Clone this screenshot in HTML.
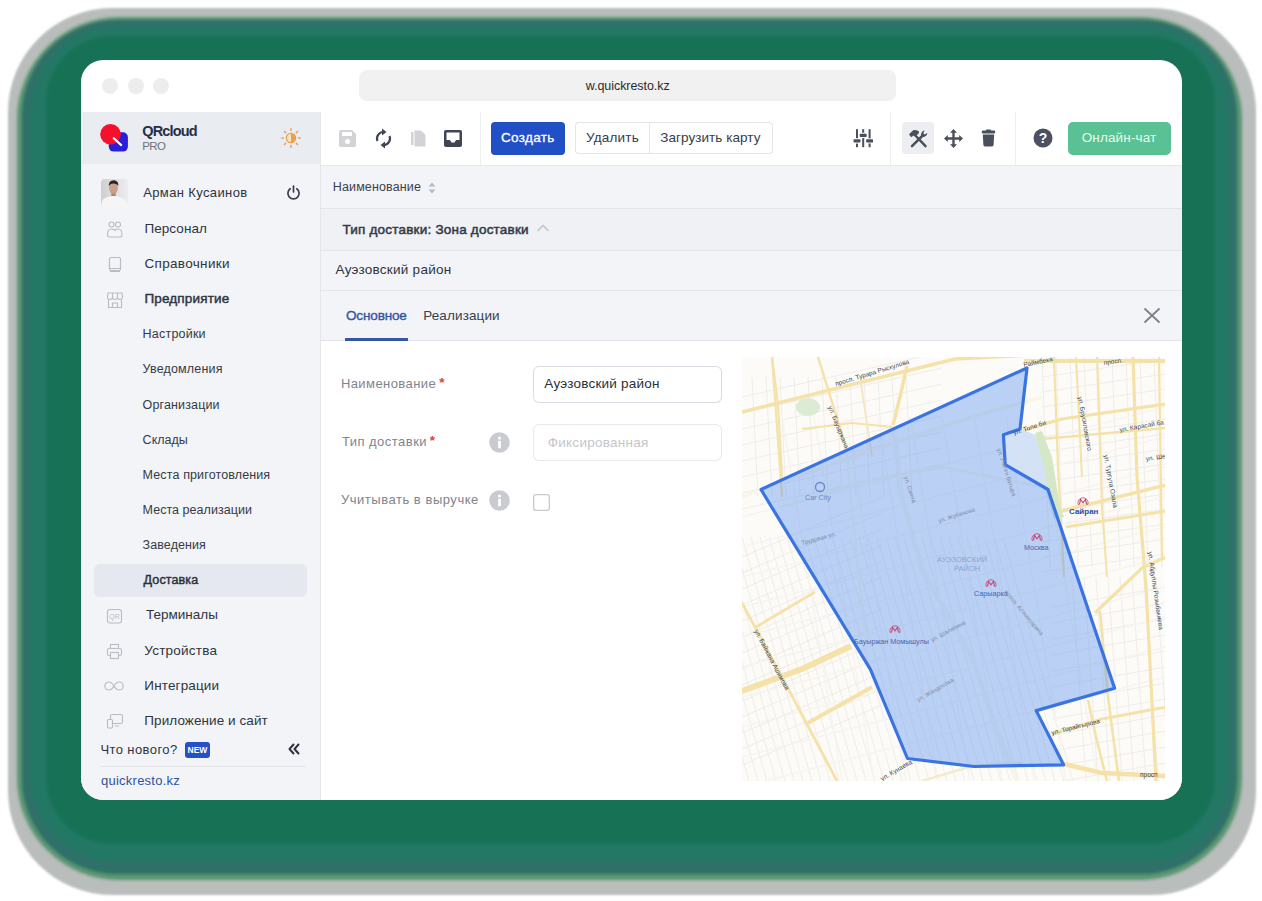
<!DOCTYPE html>
<html><head><meta charset="utf-8">
<style>
html,body{margin:0;padding:0;}
body{width:1262px;height:901px;overflow:hidden;background:#fff;position:relative;font-family:"Liberation Sans",sans-serif;}
.a{position:absolute;}
.t{position:absolute;white-space:nowrap;}
#noise{position:absolute;left:8px;top:8px;width:1248px;height:887px;border-radius:104px;background:#b9bdbb;filter:blur(1px)}
.g{position:absolute;}
#win{position:absolute;left:81px;top:60px;width:1101px;height:740px;border-radius:22px;background:#fff;overflow:hidden;}
</style></head><body>
<div id="noise"></div>
<div style="position:absolute;left:0;top:0;width:1262px;height:901px;filter:blur(1.5px)"><div class="g" style="left:17.0px;top:17.0px;width:1225.0px;height:863.0px;border-radius:102.0px;background:#5a9672"></div><div class="g" style="left:22.1px;top:20.4px;width:1215.1px;height:853.2px;border-radius:95.6px;background:#2f7068"></div><div class="g" style="left:31.1px;top:26.5px;width:1197.7px;height:835.9px;border-radius:84.4px;background:#227864"></div><div class="g" style="left:45.8px;top:36.4px;width:1169.2px;height:807.6px;border-radius:66.0px;background:#177255"></div></div>
<div id="win">
<div class="a" style="left:21px;top:18px;width:16px;height:16px;border-radius:50%;background:#ededed"></div>
<div class="a" style="left:47px;top:18px;width:16px;height:16px;border-radius:50%;background:#ededed"></div>
<div class="a" style="left:72px;top:18px;width:16px;height:16px;border-radius:50%;background:#ededed"></div>
<div class="a" style="left:278px;top:10px;width:537px;height:31px;border-radius:8px;background:#f1f1f1"></div>
<div class="t" id="t0" style="left:504.70px;top:20.12px;font-size:12.5px;line-height:12.5px;color:#2a2a2a;font-weight:400;letter-spacing:-0.050px;">w.quickresto.kz</div>
<div class="a" style="left:0px;top:52px;width:239px;height:688px;background:#f2f4f8"></div>
<div class="a" style="left:0px;top:52px;width:239px;height:52px;background:#e9ecf0"></div>
<div class="a" style="left:239px;top:52px;width:1px;height:688px;background:#e4e6eb"></div>
<svg class="a" style="left:17px;top:62px" width="32" height="32" viewBox="0 0 32 32"><rect x="10.8" y="10.2" width="19.1" height="19.4" rx="5" fill="#2b1fd6"/><circle cx="12.5" cy="12.2" r="10.3" fill="#f5102e"/><line x1="15.8" y1="16.2" x2="23.2" y2="23.1" stroke="#fff" stroke-width="2.2" stroke-linecap="round"/></svg>
<div class="t" id="t1" style="left:61.20px;top:63.73px;font-size:14.5px;line-height:14.5px;color:#262e48;font-weight:700;letter-spacing:-0.817px;">QRcloud</div>
<div class="t" id="t2" style="left:61.30px;top:81.17px;font-size:11.5px;line-height:11.5px;color:#6e737e;font-weight:400;letter-spacing:-0.600px;">PRO</div>
<svg class="a" style="left:194.5px;top:63.3px" width="30" height="30" viewBox="0 0 30 30"><circle cx="15" cy="15" r="4.6" fill="#fbe3c4" stroke="#eb9f48" stroke-width="1.4"/><path d="M15 10.8 A4.2 4.2 0 0 1 15 19.2 Z" fill="#eb9f48"/><line x1="22.60" y1="15.00" x2="24.20" y2="15.00" stroke="#e4a35a" stroke-width="1.5" stroke-linecap="round"/><line x1="20.37" y1="20.37" x2="21.51" y2="21.51" stroke="#e4a35a" stroke-width="1.5" stroke-linecap="round"/><line x1="15.00" y1="22.60" x2="15.00" y2="24.20" stroke="#e4a35a" stroke-width="1.5" stroke-linecap="round"/><line x1="9.63" y1="20.37" x2="8.49" y2="21.51" stroke="#e4a35a" stroke-width="1.5" stroke-linecap="round"/><line x1="7.40" y1="15.00" x2="5.80" y2="15.00" stroke="#e4a35a" stroke-width="1.5" stroke-linecap="round"/><line x1="9.63" y1="9.63" x2="8.49" y2="8.49" stroke="#e4a35a" stroke-width="1.5" stroke-linecap="round"/><line x1="15.00" y1="7.40" x2="15.00" y2="5.80" stroke="#e4a35a" stroke-width="1.5" stroke-linecap="round"/><line x1="20.37" y1="9.63" x2="21.51" y2="8.49" stroke="#e4a35a" stroke-width="1.5" stroke-linecap="round"/></svg>
<svg class="a" style="left:20px;top:119px" width="27" height="27" viewBox="0 0 27 27"><defs><linearGradient id="avg" x1="0" x2="1"><stop offset="0" stop-color="#cfcfd2"/><stop offset="1" stop-color="#ededef"/></linearGradient><clipPath id="avc"><rect width="27" height="27" rx="4"/></clipPath></defs><g clip-path="url(#avc)"><rect width="27" height="27" fill="url(#avg)"/><rect x="10.3" y="12" width="4.4" height="5.5" fill="#a98572"/><ellipse cx="12.5" cy="9.2" rx="4.4" ry="5.6" fill="#c9a18b"/><path d="M7.8 7.5 Q7.5 1.2 12.8 1.2 Q17.6 1.3 17.3 7 Q16 4.2 12.5 4.4 Q9 4.4 7.8 7.5Z" fill="#2b2522"/><path d="M0 27 L1.5 21 Q4 18 11 17 L14 17 Q21 18 24 21 L27 27Z" fill="#f5f5f5"/></g></svg>
<div class="t" id="t3" style="left:62.20px;top:126.00px;font-size:13px;line-height:13px;color:#2d3240;font-weight:400;letter-spacing:0.377px;">Арман Кусаинов</div>
<svg class="a" style="left:205px;top:125px" width="15" height="15" viewBox="0 0 15 15"><path d="M4.2 3.8 A5.6 5.6 0 1 0 10.8 3.8" fill="none" stroke="#3a3f4c" stroke-width="1.7" stroke-linecap="round"/><line x1="7.5" y1="1.2" x2="7.5" y2="7" stroke="#3a3f4c" stroke-width="1.7" stroke-linecap="round"/></svg>
<div class="t" id="t4" style="left:63.40px;top:162.27px;font-size:13.5px;line-height:13.5px;color:#2f3441;font-weight:400;letter-spacing:0.086px;">Персонал</div>
<svg class="a" style="left:25px;top:161px" width="18" height="18" viewBox="0 0 18 18"><circle cx="5.5" cy="3.5" r="2.5" fill="none" stroke="#b9bcc4" stroke-width="1.1"/><circle cx="12" cy="3.5" r="2.5" fill="none" stroke="#b9bcc4" stroke-width="1.1"/><path d="M3 16 Q1.5 16 1.5 13.5 Q1.5 8 5.5 8 Q8.5 8 8.8 10 Q9 8 12 8 Q16 8 16 13.5 Q16 16 14.5 16Z" fill="none" stroke="#b9bcc4" stroke-width="1.1"/></svg>
<div class="t" id="t5" style="left:63.40px;top:197.27px;font-size:13.5px;line-height:13.5px;color:#2f3441;font-weight:400;letter-spacing:0.340px;">Справочники</div>
<svg class="a" style="left:26px;top:196px" width="16" height="18" viewBox="0 0 16 18"><rect x="2.5" y="1.5" width="11" height="13" rx="1.5" fill="none" stroke="#b9bcc4" stroke-width="1.2"/><line x1="2.5" y1="12.5" x2="13.5" y2="12.5" stroke="#b9bcc4" stroke-width="1"/><line x1="3" y1="15.5" x2="13" y2="15.5" stroke="#b9bcc4" stroke-width="1"/></svg>
<div class="t" id="t6" style="left:63.40px;top:231.87px;font-size:13.5px;line-height:13.5px;color:#2f3441;font-weight:400;letter-spacing:0.170px;-webkit-text-stroke:0.45px #2f3441;">Предприятие</div>
<svg class="a" style="left:25px;top:231px" width="18" height="18" viewBox="0 0 18 18"><path d="M2 2 H16 L16.5 6 Q16.5 8.5 14 8.5 Q11.5 8.5 11.5 6 Q11.5 8.5 9 8.5 Q6.5 8.5 6.5 6 Q6.5 8.5 4 8.5 Q1.5 8.5 1.5 6Z" fill="none" stroke="#b9bcc4" stroke-width="1.1"/><path d="M2.5 8.5 V16.5 H15.5 V8.5 M6.5 16.5 V12 H11.5 V16.5" fill="none" stroke="#b9bcc4" stroke-width="1.1"/><line x1="6.5" y1="2" x2="6.5" y2="6" stroke="#b9bcc4" stroke-width="1"/><line x1="11.5" y1="2" x2="11.5" y2="6" stroke="#b9bcc4" stroke-width="1"/></svg>
<div class="t" id="t7" style="left:61.60px;top:268.22px;font-size:12.5px;line-height:12.5px;color:#353a47;font-weight:400;letter-spacing:0.213px;">Настройки</div>
<div class="t" id="t8" style="left:61.60px;top:303.42px;font-size:12.5px;line-height:12.5px;color:#353a47;font-weight:400;letter-spacing:0.170px;">Уведомления</div>
<div class="t" id="t9" style="left:61.60px;top:338.92px;font-size:12.5px;line-height:12.5px;color:#353a47;font-weight:400;letter-spacing:0.140px;">Организации</div>
<div class="t" id="t10" style="left:61.60px;top:373.52px;font-size:12.5px;line-height:12.5px;color:#353a47;font-weight:400;letter-spacing:0.020px;">Склады</div>
<div class="t" id="t11" style="left:61.60px;top:408.72px;font-size:12.5px;line-height:12.5px;color:#353a47;font-weight:400;letter-spacing:0.128px;">Места приготовления</div>
<div class="t" id="t12" style="left:61.60px;top:443.92px;font-size:12.5px;line-height:12.5px;color:#353a47;font-weight:400;letter-spacing:0.040px;">Места реализации</div>
<div class="t" id="t13" style="left:61.60px;top:479.22px;font-size:12.5px;line-height:12.5px;color:#353a47;font-weight:400;letter-spacing:0.088px;">Заведения</div>
<div class="a" style="left:13px;top:504px;width:213px;height:33px;border-radius:6px;background:#e5e8ee"></div>
<div class="t" id="t14" style="left:62.60px;top:514.12px;font-size:12.5px;line-height:12.5px;color:#2b303c;font-weight:400;letter-spacing:0.129px;-webkit-text-stroke:0.45px #2b303c;">Доставка</div>
<div class="t" id="t15" style="left:64.90px;top:547.87px;font-size:13.5px;line-height:13.5px;color:#2f3441;font-weight:400;letter-spacing:0.025px;">Терминалы</div>
<svg class="a" style="left:25px;top:548px" width="18" height="17" viewBox="0 0 18 17"><rect x="1.5" y="1.5" width="14" height="13.5" rx="2.5" fill="none" stroke="#b9bcc4" stroke-width="1.1"/><text x="8.5" y="11" font-size="7" text-anchor="middle" fill="#b9bcc4" font-family="Liberation Sans">QR</text></svg>
<div class="t" id="t16" style="left:63.30px;top:583.87px;font-size:13.5px;line-height:13.5px;color:#2f3441;font-weight:400;letter-spacing:0.222px;">Устройства</div>
<svg class="a" style="left:25px;top:583px" width="18" height="17" viewBox="0 0 18 17"><rect x="4.5" y="1.5" width="8" height="4" fill="none" stroke="#b9bcc4" stroke-width="1.1"/><rect x="1.5" y="5.5" width="14" height="7" rx="1.5" fill="none" stroke="#b9bcc4" stroke-width="1.1"/><rect x="4.5" y="9.5" width="8" height="6" fill="#f2f4f8" stroke="#b9bcc4" stroke-width="1.1"/></svg>
<div class="t" id="t17" style="left:63.30px;top:618.97px;font-size:13.5px;line-height:13.5px;color:#2f3441;font-weight:400;letter-spacing:0.144px;">Интеграции</div>
<svg class="a" style="left:23px;top:620px" width="20" height="12" viewBox="0 0 20 12"><path d="M10 6 C8 2.5 6.5 2 4.8 2 A4 4 0 0 0 4.8 10 C6.5 10 8 9.5 10 6 C12 2.5 13.5 2 15.2 2 A4 4 0 0 1 15.2 10 C13.5 10 12 9.5 10 6Z" fill="none" stroke="#b9bcc4" stroke-width="1.2"/></svg>
<div class="t" id="t18" style="left:63.30px;top:654.17px;font-size:13.5px;line-height:13.5px;color:#2f3441;font-weight:400;letter-spacing:0.075px;">Приложение и сайт</div>
<svg class="a" style="left:25px;top:653px" width="18" height="17" viewBox="0 0 18 17"><rect x="4.5" y="1.5" width="12" height="9" rx="1.5" fill="none" stroke="#b9bcc4" stroke-width="1.1"/><rect x="1.5" y="6.5" width="5" height="8.5" rx="1" fill="#f2f4f8" stroke="#b9bcc4" stroke-width="1.1"/><line x1="9" y1="13" x2="13" y2="13" stroke="#b9bcc4" stroke-width="1"/></svg>
<div class="t" id="t19" style="left:19.40px;top:682.60px;font-size:13px;line-height:13px;color:#2f3441;font-weight:400;letter-spacing:0.410px;">Что нового?</div>
<div class="a" style="left:104px;top:682px;width:25px;height:16px;border-radius:3px;background:#2450c8"></div>
<div class="t" id="t20" style="left:106.50px;top:686.30px;font-size:8.5px;line-height:8.5px;color:#ffffff;font-weight:700;letter-spacing:0.000px;">NEW</div>
<svg class="a" style="left:206px;top:682px" width="14" height="14" viewBox="0 0 14 14"><path d="M6.5 2.5 L2.5 7 L6.5 11.5 M11.5 2.5 L7.5 7 L11.5 11.5" fill="none" stroke="#2d3240" stroke-width="2" stroke-linejoin="round" stroke-linecap="round"/></svg>
<div class="a" style="left:19px;top:706px;width:206px;height:1px;background:#e3e5ea"></div>
<div class="t" id="t21" style="left:20.00px;top:713.70px;font-size:13px;line-height:13px;color:#30519f;font-weight:400;letter-spacing:0.242px;">quickresto.kz</div>
<div class="a" style="left:240px;top:52px;width:861px;height:53px;background:#ffffff"></div>
<div class="a" style="left:240px;top:105px;width:861px;height:1px;background:#e6e8ec"></div>
<div class="a" style="left:399px;top:52px;width:1px;height:53px;background:#eceef1"></div>
<div class="a" style="left:809px;top:52px;width:1px;height:53px;background:#eceef1"></div>
<div class="a" style="left:934px;top:52px;width:1px;height:53px;background:#eceef1"></div>
<svg class="a" style="left:258px;top:70px" width="17" height="17" viewBox="0 0 17 17"><path d="M2 0 H13 L17 4 V15 A2 2 0 0 1 15 17 H2 A2 2 0 0 1 0 15 V2 A2 2 0 0 1 2 0Z" fill="#d2d3d6"/><rect x="3" y="2" width="10" height="4" fill="#fff"/><circle cx="8.5" cy="11.5" r="2.5" fill="#fff"/></svg>
<svg class="a" style="left:293px;top:68px" width="19" height="21" viewBox="0 0 19 21"><path d="M9.5 4 A6.5 6.5 0 0 0 3.5 13" fill="none" stroke="#404556" stroke-width="2.2"/><path d="M9.5 17 A6.5 6.5 0 0 0 15.5 8" fill="none" stroke="#404556" stroke-width="2.2"/><path d="M8 0.5 L12.5 4 L8 7.5Z" fill="#404556"/><path d="M11 13.5 L6.5 17 L11 20.5Z" fill="#404556"/></svg>
<svg class="a" style="left:329px;top:69px" width="17" height="19" viewBox="0 0 17 19"><path d="M1 3 H9 V16 H1Z" fill="#d2d3d6"/><path d="M4 1 H11 L16 6 V18 H4Z" fill="#d2d3d6" stroke="#fff" stroke-width="1"/></svg>
<svg class="a" style="left:363px;top:70px" width="18" height="17" viewBox="0 0 18 17"><path d="M2 0 H16 A2 2 0 0 1 18 2 V15 A2 2 0 0 1 16 17 H2 A2 2 0 0 1 0 15 V2 A2 2 0 0 1 2 0Z" fill="#404556"/><path d="M2.5 2.5 H15.5 V10 H12 L10.5 12.5 H7.5 L6 10 H2.5Z" fill="#fff"/></svg>
<div class="a" style="left:410px;top:62px;width:74px;height:33px;border-radius:4px;background:#2150c6"></div>
<div class="t" id="t22" style="left:420.00px;top:71.37px;font-size:13.5px;line-height:13.5px;color:#ffffff;font-weight:400;letter-spacing:0.317px;-webkit-text-stroke:0.3px #fff;">Создать</div>
<div class="a" style="left:494px;top:62px;width:198px;height:32px;border-radius:4px;background:#fff;box-shadow:inset 0 0 0 1px #e3e5e9"></div>
<div class="a" style="left:568px;top:63px;width:1px;height:30px;background:#e3e5e9"></div>
<div class="t" id="t23" style="left:505.00px;top:71.37px;font-size:13.5px;line-height:13.5px;color:#363b48;font-weight:400;letter-spacing:0.200px;">Удалить</div>
<div class="t" id="t24" style="left:579.20px;top:71.37px;font-size:13.5px;line-height:13.5px;color:#363b48;font-weight:400;letter-spacing:0.064px;">Загрузить карту</div>
<svg class="a" style="left:772px;top:68px" width="20" height="21" viewBox="0 0 20 21"><rect x="3" y="1.2" width="2" height="18" fill="#4a4f5c"/><rect x="9.2" y="1.2" width="2" height="18" fill="#4a4f5c"/><rect x="15.6" y="1.2" width="2" height="18" fill="#4a4f5c"/><rect x="0.5" y="11.3" width="7" height="3.2" rx="0.8" fill="#4a4f5c"/><rect x="6.7" y="5.8" width="7" height="3.2" rx="0.8" fill="#4a4f5c"/><rect x="13.1" y="11.3" width="7" height="3.2" rx="0.8" fill="#4a4f5c"/><rect x="3" y="10.2" width="2" height="1.1" fill="#fff"/><rect x="3" y="14.5" width="2" height="1.1" fill="#fff"/><rect x="9.2" y="4.7" width="2" height="1.1" fill="#fff"/><rect x="9.2" y="9" width="2" height="1.1" fill="#fff"/><rect x="15.6" y="10.2" width="2" height="1.1" fill="#fff"/><rect x="15.6" y="14.5" width="2" height="1.1" fill="#fff"/></svg>
<div class="a" style="left:821px;top:62px;width:32px;height:32px;border-radius:4px;background:#eceef2"></div>
<svg class="a" style="left:827px;top:68px" width="22" height="21" viewBox="0 0 22 21"><path d="M6 6 L17.5 18.2" stroke="#4a4f5c" stroke-width="2.5" stroke-linecap="round"/><path d="M1 6.3 L5.2 2.2 Q7.5 1.3 10.8 3.2 L11 5 L7.2 8.8 L5.6 7.6 L3.2 9.3 Z" fill="#4a4f5c"/><path d="M4 18.2 L15.2 7" stroke="#4a4f5c" stroke-width="2.5" stroke-linecap="round"/><path d="M13.2 8.2 A4.2 4.2 0 0 1 16.8 2.6 L15.2 5.2 L16.6 6.6 L19.3 5 A4.2 4.2 0 0 1 13.6 8.8 Z" fill="#4a4f5c"/></svg>
<svg class="a" style="left:863px;top:69px" width="19" height="19" viewBox="0 0 19 19"><path d="M9.5 2 V17 M2 9.5 H17" stroke="#4a4f5c" stroke-width="2.4"/><path d="M9.5 0 L13 3.8 H6Z M9.5 19 L13 15.2 H6Z M0 9.5 L3.8 6 V13Z M19 9.5 L15.2 6 V13Z" fill="#4a4f5c"/></svg>
<svg class="a" style="left:900px;top:69px" width="15" height="19" viewBox="0 0 15 19"><rect x="0.8" y="1.6" width="13.4" height="2.8" rx="1.2" fill="#4a4f5c"/><rect x="5" y="0.6" width="5" height="2" rx="0.8" fill="#4a4f5c"/><path d="M1.8 5.6 H13.2 L12.6 16 A2 2 0 0 1 10.6 17.6 H4.4 A2 2 0 0 1 2.4 16Z" fill="#4a4f5c"/></svg>
<svg class="a" style="left:952px;top:68px" width="20" height="20" viewBox="0 0 20 20"><circle cx="10" cy="10" r="9.5" fill="#4b5063"/><text x="10" y="15.2" font-size="14" font-weight="700" text-anchor="middle" fill="#fff" font-family="Liberation Sans">?</text></svg>
<div class="a" style="left:987px;top:62px;width:103px;height:33px;border-radius:5px;background:#5ac195"></div>
<div class="t" id="t25" style="left:1000.70px;top:71.17px;font-size:13.5px;line-height:13.5px;color:#e2fdee;font-weight:400;letter-spacing:0.144px;">Онлайн-чат</div>
<div class="a" style="left:240px;top:106px;width:861px;height:175px;background:#f3f4f7"></div>
<div class="a" style="left:240px;top:148px;width:861px;height:1px;background:#e3e5e9"></div>
<div class="a" style="left:240px;top:149px;width:861px;height:41px;background:#eff1f4"></div>
<div class="a" style="left:240px;top:190px;width:861px;height:1px;background:#e3e5e9"></div>
<div class="a" style="left:240px;top:230px;width:861px;height:1px;background:#e3e5e9"></div>
<div class="a" style="left:240px;top:280px;width:861px;height:1px;background:#e3e5e9"></div>
<div class="t" id="t26" style="left:251.80px;top:121.02px;font-size:12.5px;line-height:12.5px;color:#3b404d;font-weight:400;letter-spacing:0.127px;">Наименование</div>
<svg class="a" style="left:346px;top:121px" width="10" height="14" viewBox="0 0 10 14"><path d="M5 1.5 L8.5 5.5 H1.5Z M5 12.5 L8.5 8.5 H1.5Z" fill="#b6b9c0"/></svg>
<div class="t" id="t27" style="left:261.40px;top:162.67px;font-size:13.5px;line-height:13.5px;color:#343946;font-weight:400;letter-spacing:0.212px;-webkit-text-stroke:0.5px #343946;">Тип доставки: Зона доставки</div>
<svg class="a" style="left:455px;top:162px" width="14" height="12" viewBox="0 0 14 12"><path d="M1.5 9 L7 3.5 L12.5 9" fill="none" stroke="#c3c6cc" stroke-width="1.6"/></svg>
<div class="t" id="t28" style="left:254.60px;top:202.97px;font-size:13.5px;line-height:13.5px;color:#2f3441;font-weight:400;letter-spacing:0.253px;">Ауэзовский район</div>
<div class="t" id="t29" style="left:265.00px;top:248.77px;font-size:13.5px;line-height:13.5px;color:#3456a6;font-weight:400;letter-spacing:-0.143px;-webkit-text-stroke:0.4px #3456a6;">Основное</div>
<div class="a" style="left:264px;top:278px;width:63px;height:3px;background:#3456a6"></div>
<div class="t" id="t30" style="left:342.20px;top:248.77px;font-size:13.5px;line-height:13.5px;color:#3a3f4c;font-weight:400;letter-spacing:0.122px;">Реализации</div>
<svg class="a" style="left:1062px;top:247px" width="18" height="17" viewBox="0 0 18 17"><path d="M1.5 1.5 L16.5 15.5 M16.5 1.5 L1.5 15.5" stroke="#7b808b" stroke-width="1.8"/></svg>
<div class="a" style="left:240px;top:281px;width:861px;height:459px;background:#ffffff"></div>
<div class="t" id="t31" style="left:259.90px;top:317.30px;font-size:13px;line-height:13px;color:#80848f;font-weight:400;letter-spacing:0.427px;">Наименование</div>
<div class="t" id="t32" style="left:358.20px;top:316.07px;font-size:13.5px;line-height:13.5px;color:#d9433b;font-weight:700;letter-spacing:0.000px;">*</div>
<div class="a" style="left:452px;top:306px;width:189px;height:37px;border-radius:6px;background:#fff;box-shadow:inset 0 0 0 1px #d9dce2"></div>
<div class="t" id="t33" style="left:463.30px;top:317.37px;font-size:13.5px;line-height:13.5px;color:#2b2f3a;font-weight:400;letter-spacing:0.227px;">Ауэзовский район</div>
<div class="t" id="t34" style="left:260.90px;top:375.10px;font-size:13px;line-height:13px;color:#80848f;font-weight:400;letter-spacing:0.473px;">Тип доставки</div>
<div class="t" id="t35" style="left:348.80px;top:373.87px;font-size:13.5px;line-height:13.5px;color:#d9433b;font-weight:700;letter-spacing:0.000px;">*</div>
<svg class="a" style="left:408px;top:372px" width="21" height="21" viewBox="0 0 21 21"><circle cx="10.5" cy="10.5" r="10.3" fill="#c9cbd0"/><circle cx="10.5" cy="6" r="1.6" fill="#fff"/><rect x="9.1" y="8.8" width="2.8" height="7.5" rx="0.6" fill="#fff"/></svg>
<div class="a" style="left:452px;top:364px;width:189px;height:37px;border-radius:6px;background:#fff;box-shadow:inset 0 0 0 1px #e7e9ed"></div>
<div class="t" id="t36" style="left:466.70px;top:375.77px;font-size:13.5px;line-height:13.5px;color:#c3c6cc;font-weight:400;letter-spacing:0.275px;">Фиксированная</div>
<div class="t" id="t37" style="left:259.90px;top:432.90px;font-size:13px;line-height:13px;color:#80848f;font-weight:400;letter-spacing:0.533px;">Учитывать в выручке</div>
<svg class="a" style="left:408px;top:430px" width="21" height="21" viewBox="0 0 21 21"><circle cx="10.5" cy="10.5" r="10.3" fill="#c9cbd0"/><circle cx="10.5" cy="6" r="1.6" fill="#fff"/><rect x="9.1" y="8.8" width="2.8" height="7.5" rx="0.6" fill="#fff"/></svg>
<div class="a" style="left:452px;top:434px;width:17px;height:17px;border-radius:3px;background:#fff;box-shadow:inset 0 0 0 1.3px #c6cad1"></div>
<div class="a" style="left:661px;top:297px;width:423px;height:424px;border-radius:3px;overflow:hidden"><svg width="423" height="424" viewBox="0 0 423 424"><rect width="423" height="424" fill="#fcfbf7"/><line x1="-108.0" y1="180.0" x2="-38.0" y2="424.0" stroke="#ebeae5" stroke-width="0.8"/><line x1="-99.0" y1="180.0" x2="-29.0" y2="424.0" stroke="#ebeae5" stroke-width="0.8"/><line x1="-90.0" y1="180.0" x2="-20.0" y2="424.0" stroke="#ebeae5" stroke-width="0.8"/><line x1="-81.0" y1="180.0" x2="-11.0" y2="424.0" stroke="#ebeae5" stroke-width="0.8"/><line x1="-72.0" y1="180.0" x2="-2.0" y2="424.0" stroke="#ebeae5" stroke-width="0.8"/><line x1="-63.0" y1="180.0" x2="7.0" y2="424.0" stroke="#ebeae5" stroke-width="0.8"/><line x1="-54.0" y1="180.0" x2="16.0" y2="424.0" stroke="#ebeae5" stroke-width="0.8"/><line x1="-45.0" y1="180.0" x2="25.0" y2="424.0" stroke="#ebeae5" stroke-width="0.8"/><line x1="-36.0" y1="180.0" x2="34.0" y2="424.0" stroke="#ebeae5" stroke-width="0.8"/><line x1="-27.0" y1="180.0" x2="43.0" y2="424.0" stroke="#ebeae5" stroke-width="0.8"/><line x1="-18.0" y1="180.0" x2="52.0" y2="424.0" stroke="#ebeae5" stroke-width="0.8"/><line x1="-9.0" y1="180.0" x2="61.0" y2="424.0" stroke="#ebeae5" stroke-width="0.8"/><line x1="0.0" y1="180.0" x2="70.0" y2="424.0" stroke="#ebeae5" stroke-width="0.8"/><line x1="9.0" y1="180.0" x2="79.0" y2="424.0" stroke="#ebeae5" stroke-width="0.8"/><line x1="18.0" y1="180.0" x2="88.0" y2="424.0" stroke="#ebeae5" stroke-width="0.8"/><line x1="27.0" y1="180.0" x2="97.0" y2="424.0" stroke="#ebeae5" stroke-width="0.8"/><line x1="36.0" y1="180.0" x2="106.0" y2="424.0" stroke="#ebeae5" stroke-width="0.8"/><line x1="45.0" y1="180.0" x2="115.0" y2="424.0" stroke="#ebeae5" stroke-width="0.8"/><line x1="54.0" y1="180.0" x2="124.0" y2="424.0" stroke="#ebeae5" stroke-width="0.8"/><line x1="63.0" y1="180.0" x2="133.0" y2="424.0" stroke="#ebeae5" stroke-width="0.8"/><line x1="72.0" y1="180.0" x2="142.0" y2="424.0" stroke="#ebeae5" stroke-width="0.8"/><line x1="81.0" y1="180.0" x2="151.0" y2="424.0" stroke="#ebeae5" stroke-width="0.8"/><line x1="90.0" y1="180.0" x2="160.0" y2="424.0" stroke="#ebeae5" stroke-width="0.8"/><line x1="99.0" y1="180.0" x2="169.0" y2="424.0" stroke="#ebeae5" stroke-width="0.8"/><line x1="108.0" y1="180.0" x2="178.0" y2="424.0" stroke="#ebeae5" stroke-width="0.8"/><line x1="117.0" y1="180.0" x2="187.0" y2="424.0" stroke="#ebeae5" stroke-width="0.8"/><line x1="126.0" y1="180.0" x2="196.0" y2="424.0" stroke="#ebeae5" stroke-width="0.8"/><line x1="135.0" y1="180.0" x2="205.0" y2="424.0" stroke="#ebeae5" stroke-width="0.8"/><line x1="144.0" y1="180.0" x2="214.0" y2="424.0" stroke="#ebeae5" stroke-width="0.8"/><line x1="153.0" y1="180.0" x2="223.0" y2="424.0" stroke="#ebeae5" stroke-width="0.8"/><line x1="162.0" y1="180.0" x2="232.0" y2="424.0" stroke="#ebeae5" stroke-width="0.8"/><line x1="171.0" y1="180.0" x2="241.0" y2="424.0" stroke="#ebeae5" stroke-width="0.8"/><line x1="180.0" y1="180.0" x2="250.0" y2="424.0" stroke="#ebeae5" stroke-width="0.8"/><line x1="189.0" y1="180.0" x2="259.0" y2="424.0" stroke="#ebeae5" stroke-width="0.8"/><line x1="198.0" y1="180.0" x2="268.0" y2="424.0" stroke="#ebeae5" stroke-width="0.8"/><line x1="207.0" y1="180.0" x2="277.0" y2="424.0" stroke="#ebeae5" stroke-width="0.8"/><line x1="216.0" y1="180.0" x2="286.0" y2="424.0" stroke="#ebeae5" stroke-width="0.8"/><line x1="225.0" y1="180.0" x2="295.0" y2="424.0" stroke="#ebeae5" stroke-width="0.8"/><line x1="234.0" y1="180.0" x2="304.0" y2="424.0" stroke="#ebeae5" stroke-width="0.8"/><line x1="243.0" y1="180.0" x2="313.0" y2="424.0" stroke="#ebeae5" stroke-width="0.8"/><line x1="252.0" y1="180.0" x2="322.0" y2="424.0" stroke="#ebeae5" stroke-width="0.8"/><line x1="261.0" y1="180.0" x2="331.0" y2="424.0" stroke="#ebeae5" stroke-width="0.8"/><line x1="0.0" y1="200.0" x2="140.0" y2="140.0" stroke="#ebeae5" stroke-width="0.8"/><line x1="0.0" y1="216.0" x2="140.0" y2="156.0" stroke="#ebeae5" stroke-width="0.8"/><line x1="0.0" y1="232.0" x2="140.0" y2="172.0" stroke="#ebeae5" stroke-width="0.8"/><line x1="0.0" y1="248.0" x2="140.0" y2="188.0" stroke="#ebeae5" stroke-width="0.8"/><line x1="0.0" y1="264.0" x2="140.0" y2="204.0" stroke="#ebeae5" stroke-width="0.8"/><line x1="0.0" y1="280.0" x2="140.0" y2="220.0" stroke="#ebeae5" stroke-width="0.8"/><line x1="0.0" y1="296.0" x2="140.0" y2="236.0" stroke="#ebeae5" stroke-width="0.8"/><line x1="0.0" y1="312.0" x2="140.0" y2="252.0" stroke="#ebeae5" stroke-width="0.8"/><line x1="0.0" y1="328.0" x2="140.0" y2="268.0" stroke="#ebeae5" stroke-width="0.8"/><line x1="0.0" y1="344.0" x2="140.0" y2="284.0" stroke="#ebeae5" stroke-width="0.8"/><line x1="0.0" y1="360.0" x2="140.0" y2="300.0" stroke="#ebeae5" stroke-width="0.8"/><line x1="0.0" y1="376.0" x2="140.0" y2="316.0" stroke="#ebeae5" stroke-width="0.8"/><line x1="0.0" y1="392.0" x2="140.0" y2="332.0" stroke="#ebeae5" stroke-width="0.8"/><line x1="0.0" y1="408.0" x2="140.0" y2="348.0" stroke="#ebeae5" stroke-width="0.8"/><line x1="10.0" y1="20.0" x2="16.0" y2="140.0" stroke="#ebeae5" stroke-width="0.8"/><line x1="24.0" y1="20.0" x2="30.0" y2="140.0" stroke="#ebeae5" stroke-width="0.8"/><line x1="38.0" y1="20.0" x2="44.0" y2="140.0" stroke="#ebeae5" stroke-width="0.8"/><line x1="52.0" y1="20.0" x2="58.0" y2="140.0" stroke="#ebeae5" stroke-width="0.8"/><line x1="66.0" y1="20.0" x2="72.0" y2="140.0" stroke="#ebeae5" stroke-width="0.8"/><line x1="80.0" y1="20.0" x2="86.0" y2="140.0" stroke="#ebeae5" stroke-width="0.8"/><line x1="94.0" y1="20.0" x2="100.0" y2="140.0" stroke="#ebeae5" stroke-width="0.8"/><line x1="108.0" y1="20.0" x2="114.0" y2="140.0" stroke="#ebeae5" stroke-width="0.8"/><line x1="122.0" y1="20.0" x2="128.0" y2="140.0" stroke="#ebeae5" stroke-width="0.8"/><line x1="136.0" y1="20.0" x2="142.0" y2="140.0" stroke="#ebeae5" stroke-width="0.8"/><line x1="150.0" y1="20.0" x2="156.0" y2="140.0" stroke="#ebeae5" stroke-width="0.8"/><line x1="164.0" y1="20.0" x2="170.0" y2="140.0" stroke="#ebeae5" stroke-width="0.8"/><line x1="0.0" y1="40.0" x2="200.0" y2="-5.0" stroke="#ebeae5" stroke-width="0.8"/><line x1="0.0" y1="56.0" x2="200.0" y2="11.0" stroke="#ebeae5" stroke-width="0.8"/><line x1="0.0" y1="72.0" x2="200.0" y2="27.0" stroke="#ebeae5" stroke-width="0.8"/><line x1="0.0" y1="88.0" x2="200.0" y2="43.0" stroke="#ebeae5" stroke-width="0.8"/><line x1="0.0" y1="104.0" x2="200.0" y2="59.0" stroke="#ebeae5" stroke-width="0.8"/><line x1="0.0" y1="120.0" x2="200.0" y2="75.0" stroke="#ebeae5" stroke-width="0.8"/><line x1="0.0" y1="136.0" x2="200.0" y2="91.0" stroke="#ebeae5" stroke-width="0.8"/><line x1="0.0" y1="152.0" x2="200.0" y2="107.0" stroke="#ebeae5" stroke-width="0.8"/><line x1="300.0" y1="0.0" x2="308.0" y2="210.0" stroke="#ebeae5" stroke-width="0.8"/><line x1="314.0" y1="0.0" x2="322.0" y2="210.0" stroke="#ebeae5" stroke-width="0.8"/><line x1="328.0" y1="0.0" x2="336.0" y2="210.0" stroke="#ebeae5" stroke-width="0.8"/><line x1="342.0" y1="0.0" x2="350.0" y2="210.0" stroke="#ebeae5" stroke-width="0.8"/><line x1="356.0" y1="0.0" x2="364.0" y2="210.0" stroke="#ebeae5" stroke-width="0.8"/><line x1="370.0" y1="0.0" x2="378.0" y2="210.0" stroke="#ebeae5" stroke-width="0.8"/><line x1="384.0" y1="0.0" x2="392.0" y2="210.0" stroke="#ebeae5" stroke-width="0.8"/><line x1="398.0" y1="0.0" x2="406.0" y2="210.0" stroke="#ebeae5" stroke-width="0.8"/><line x1="412.0" y1="0.0" x2="420.0" y2="210.0" stroke="#ebeae5" stroke-width="0.8"/><line x1="300.0" y1="20.0" x2="423.0" y2="2.0" stroke="#ebeae5" stroke-width="0.8"/><line x1="300.0" y1="35.0" x2="423.0" y2="17.0" stroke="#ebeae5" stroke-width="0.8"/><line x1="300.0" y1="50.0" x2="423.0" y2="32.0" stroke="#ebeae5" stroke-width="0.8"/><line x1="300.0" y1="65.0" x2="423.0" y2="47.0" stroke="#ebeae5" stroke-width="0.8"/><line x1="300.0" y1="80.0" x2="423.0" y2="62.0" stroke="#ebeae5" stroke-width="0.8"/><line x1="300.0" y1="95.0" x2="423.0" y2="77.0" stroke="#ebeae5" stroke-width="0.8"/><line x1="300.0" y1="110.0" x2="423.0" y2="92.0" stroke="#ebeae5" stroke-width="0.8"/><line x1="300.0" y1="125.0" x2="423.0" y2="107.0" stroke="#ebeae5" stroke-width="0.8"/><line x1="300.0" y1="140.0" x2="423.0" y2="122.0" stroke="#ebeae5" stroke-width="0.8"/><line x1="300.0" y1="155.0" x2="423.0" y2="137.0" stroke="#ebeae5" stroke-width="0.8"/><line x1="300.0" y1="170.0" x2="423.0" y2="152.0" stroke="#ebeae5" stroke-width="0.8"/><line x1="300.0" y1="185.0" x2="423.0" y2="167.0" stroke="#ebeae5" stroke-width="0.8"/><line x1="300.0" y1="200.0" x2="423.0" y2="182.0" stroke="#ebeae5" stroke-width="0.8"/><line x1="300.0" y1="215.0" x2="423.0" y2="197.0" stroke="#ebeae5" stroke-width="0.8"/><line x1="330.0" y1="220.0" x2="344.0" y2="424.0" stroke="#ebeae5" stroke-width="0.8"/><line x1="342.0" y1="220.0" x2="356.0" y2="424.0" stroke="#ebeae5" stroke-width="0.8"/><line x1="354.0" y1="220.0" x2="368.0" y2="424.0" stroke="#ebeae5" stroke-width="0.8"/><line x1="366.0" y1="220.0" x2="380.0" y2="424.0" stroke="#ebeae5" stroke-width="0.8"/><line x1="378.0" y1="220.0" x2="392.0" y2="424.0" stroke="#ebeae5" stroke-width="0.8"/><line x1="390.0" y1="220.0" x2="404.0" y2="424.0" stroke="#ebeae5" stroke-width="0.8"/><line x1="402.0" y1="220.0" x2="416.0" y2="424.0" stroke="#ebeae5" stroke-width="0.8"/><line x1="414.0" y1="220.0" x2="428.0" y2="424.0" stroke="#ebeae5" stroke-width="0.8"/><line x1="310.0" y1="250.0" x2="423.0" y2="230.0" stroke="#ebeae5" stroke-width="0.8"/><line x1="310.0" y1="266.0" x2="423.0" y2="246.0" stroke="#ebeae5" stroke-width="0.8"/><line x1="310.0" y1="282.0" x2="423.0" y2="262.0" stroke="#ebeae5" stroke-width="0.8"/><line x1="310.0" y1="298.0" x2="423.0" y2="278.0" stroke="#ebeae5" stroke-width="0.8"/><line x1="310.0" y1="314.0" x2="423.0" y2="294.0" stroke="#ebeae5" stroke-width="0.8"/><line x1="310.0" y1="330.0" x2="423.0" y2="310.0" stroke="#ebeae5" stroke-width="0.8"/><line x1="310.0" y1="346.0" x2="423.0" y2="326.0" stroke="#ebeae5" stroke-width="0.8"/><line x1="310.0" y1="362.0" x2="423.0" y2="342.0" stroke="#ebeae5" stroke-width="0.8"/><line x1="310.0" y1="378.0" x2="423.0" y2="358.0" stroke="#ebeae5" stroke-width="0.8"/><line x1="310.0" y1="394.0" x2="423.0" y2="374.0" stroke="#ebeae5" stroke-width="0.8"/><line x1="310.0" y1="410.0" x2="423.0" y2="390.0" stroke="#ebeae5" stroke-width="0.8"/><line x1="310.0" y1="426.0" x2="423.0" y2="406.0" stroke="#ebeae5" stroke-width="0.8"/><line x1="40.0" y1="60.0" x2="100.0" y2="424.0" stroke="#f6f4ef" stroke-width="1.5"/><line x1="72.0" y1="60.0" x2="132.0" y2="424.0" stroke="#f6f4ef" stroke-width="1.5"/><line x1="104.0" y1="60.0" x2="164.0" y2="424.0" stroke="#f6f4ef" stroke-width="1.5"/><line x1="136.0" y1="60.0" x2="196.0" y2="424.0" stroke="#f6f4ef" stroke-width="1.5"/><line x1="168.0" y1="60.0" x2="228.0" y2="424.0" stroke="#f6f4ef" stroke-width="1.5"/><line x1="200.0" y1="60.0" x2="260.0" y2="424.0" stroke="#f6f4ef" stroke-width="1.5"/><line x1="232.0" y1="60.0" x2="292.0" y2="424.0" stroke="#f6f4ef" stroke-width="1.5"/><line x1="264.0" y1="60.0" x2="324.0" y2="424.0" stroke="#f6f4ef" stroke-width="1.5"/><line x1="296.0" y1="60.0" x2="356.0" y2="424.0" stroke="#f6f4ef" stroke-width="1.5"/><line x1="0.0" y1="160.0" x2="423.0" y2="50.0" stroke="#f6f4ef" stroke-width="1.5"/><line x1="0.0" y1="190.0" x2="423.0" y2="80.0" stroke="#f6f4ef" stroke-width="1.5"/><line x1="0.0" y1="220.0" x2="423.0" y2="110.0" stroke="#f6f4ef" stroke-width="1.5"/><line x1="0.0" y1="250.0" x2="423.0" y2="140.0" stroke="#f6f4ef" stroke-width="1.5"/><line x1="0.0" y1="280.0" x2="423.0" y2="170.0" stroke="#f6f4ef" stroke-width="1.5"/><line x1="0.0" y1="310.0" x2="423.0" y2="200.0" stroke="#f6f4ef" stroke-width="1.5"/><line x1="0.0" y1="340.0" x2="423.0" y2="230.0" stroke="#f6f4ef" stroke-width="1.5"/><line x1="0.0" y1="370.0" x2="423.0" y2="260.0" stroke="#f6f4ef" stroke-width="1.5"/><line x1="0.0" y1="400.0" x2="423.0" y2="290.0" stroke="#f6f4ef" stroke-width="1.5"/><line x1="0.0" y1="430.0" x2="423.0" y2="320.0" stroke="#f6f4ef" stroke-width="1.5"/><path d="M0.0 55.0 L100.0 30.0 L213.0 2.0 L290.0 -2.0" fill="none" stroke="#f5e2a8" stroke-width="3.5" stroke-linejoin="round"/><path d="M76.0 0.0 L90.0 45.0 L104.0 90.0" fill="none" stroke="#f5e2a8" stroke-width="2.5" stroke-linejoin="round"/><path d="M104.0 90.0 L116.0 213.0 L128.0 312.0" fill="none" stroke="#fbf6ea" stroke-width="3" stroke-linejoin="round"/><path d="M30.0 0.0 L36.0 47.0 L40.0 120.0" fill="none" stroke="#f5e2a8" stroke-width="2.2" stroke-linejoin="round"/><path d="M165.0 9.0 L158.0 40.0 L151.0 68.0" fill="none" stroke="#f5e2a8" stroke-width="3.5" stroke-linejoin="round"/><path d="M151.0 68.0 L160.0 140.0 L180.0 213.0 L230.0 300.0 L250.0 360.0 L275.0 424.0" fill="none" stroke="#f8f4ec" stroke-width="5" stroke-linejoin="round"/><path d="M0.0 140.0 L60.0 118.0 L140.0 90.0 L230.0 60.0 L300.0 40.0" fill="none" stroke="#faf5e8" stroke-width="3.5" stroke-linejoin="round"/><path d="M272.0 76.0 L320.0 62.0 L424.0 47.0" fill="none" stroke="#f5e2a8" stroke-width="3.2" stroke-linejoin="round"/><path d="M300.0 82.0 L424.0 71.0" fill="none" stroke="#f5e2a8" stroke-width="2.5" stroke-linejoin="round"/><path d="M282.0 4.0 L424.0 4.0" fill="none" stroke="#f5e2a8" stroke-width="4" stroke-linejoin="round"/><path d="M312.0 0.0 L316.0 110.0 L322.0 220.0" fill="none" stroke="#f5e2a8" stroke-width="2.2" stroke-linejoin="round"/><path d="M334.0 0.0 L340.0 120.0" fill="none" stroke="#f5e2a8" stroke-width="2.0" stroke-linejoin="round"/><path d="M355.0 0.0 L360.0 150.0 L365.0 220.0" fill="none" stroke="#f5e2a8" stroke-width="2.0" stroke-linejoin="round"/><path d="M391.0 0.0 L395.0 120.0 L404.0 230.0 L414.0 424.0" fill="none" stroke="#f5e2a8" stroke-width="3.2" stroke-linejoin="round"/><path d="M417.0 0.0 L420.0 200.0" fill="none" stroke="#f5e2a8" stroke-width="2.2" stroke-linejoin="round"/><path d="M320.0 154.0 L424.0 128.0" fill="none" stroke="#f5e2a8" stroke-width="3.5" stroke-linejoin="round"/><path d="M324.0 170.0 L424.0 154.0" fill="none" stroke="#f5e2a8" stroke-width="3.0" stroke-linejoin="round"/><path d="M0.0 246.0 L40.0 320.0 L95.0 424.0" fill="none" stroke="#f5e2a8" stroke-width="2.8" stroke-linejoin="round"/><path d="M0.0 334.0 L60.0 312.0 L109.0 289.0" fill="none" stroke="#f5e2a8" stroke-width="6" stroke-linejoin="round"/><path d="M66.0 366.0 L130.0 330.0" fill="none" stroke="#f5e2a8" stroke-width="4" stroke-linejoin="round"/><path d="M14.0 270.0 L73.0 235.0" fill="none" stroke="#f5e2a8" stroke-width="2.8" stroke-linejoin="round"/><path d="M353.0 256.0 L400.0 211.0 L424.0 200.0" fill="none" stroke="#f5e2a8" stroke-width="3.2" stroke-linejoin="round"/><path d="M358.0 254.0 L366.0 340.0 L377.0 424.0" fill="none" stroke="#f5e2a8" stroke-width="2.6" stroke-linejoin="round"/><path d="M310.0 377.0 L360.0 362.0 L424.0 350.0" fill="none" stroke="#f5e2a8" stroke-width="3.0" stroke-linejoin="round"/><path d="M346.0 343.0 L354.0 380.0 L365.0 424.0" fill="none" stroke="#f5e2a8" stroke-width="2.6" stroke-linejoin="round"/><path d="M322.0 407.0 L360.0 416.0 L424.0 419.0" fill="none" stroke="#f5e2a8" stroke-width="4.5" stroke-linejoin="round"/><path d="M180.0 424.0 L230.0 409.0 L280.0 406.0" fill="none" stroke="#f3ead0" stroke-width="2.5" stroke-linejoin="round"/><path d="M40.0 150.0 L120.0 125.0 L200.0 110.0 L300.0 130.0" fill="none" stroke="#faf5e8" stroke-width="3" stroke-linejoin="round"/><path d="M30.0 0.0 L34.0 55.0 L40.0 140.0" fill="none" stroke="#f5e2a8" stroke-width="2.2" stroke-linejoin="round"/><path d="M60.0 72.0 L110.0 66.0 L150.0 70.0" fill="none" stroke="#f5e2a8" stroke-width="2.2" stroke-linejoin="round"/><path d="M118.0 20.0 L124.0 60.0 L130.0 100.0" fill="none" stroke="#f3e6c0" stroke-width="1.8" stroke-linejoin="round"/><ellipse cx="66" cy="50" rx="12" ry="9" fill="#dcebd3"/><path d="M293 76 L300 74 L310 100 L318 150 L322 160 L312 162 L300 120 Z" fill="#d4e8c8"/><path d="M262 78 L280 72 L293 78 L302 110 L306 132 L263 108 Z" fill="#d3e2f4"/><path d="M285 11 L278 72 L261.4 77.8 L263.2 107.7 L306 132.5 L372.6 331.3 L294.2 353.6 L321.6 407.8 L232 409.5 L165.5 401.5 L128.4 312.4 L19 132.5 Z" fill="rgba(70,135,240,0.36)" stroke="#3a74e2" stroke-width="3.2" stroke-linejoin="round"/><text x="94" y="29" font-size="6.5" fill="#444a55" font-family="Liberation Sans" font-weight="400" text-anchor="start" transform="rotate(-17 94 29)">просп. Турара Рыскулова</text><text x="86" y="50" font-size="6.5" fill="#444a55" font-family="Liberation Sans" font-weight="400" text-anchor="start" transform="rotate(68 86 50)">ул. Бауыржана</text><text x="282" y="10" font-size="6.5" fill="#444a55" font-family="Liberation Sans" font-weight="400" text-anchor="start" transform="rotate(-12 282 10)">Раймбека</text><text x="362" y="8" font-size="6.5" fill="#444a55" font-family="Liberation Sans" font-weight="400" text-anchor="start" transform="rotate(-8 362 8)">просп.</text><text x="272" y="78" font-size="6.5" fill="#444a55" font-family="Liberation Sans" font-weight="400" text-anchor="start" transform="rotate(-18 272 78)">ул. Толе би</text><text x="378" y="75" font-size="6.5" fill="#444a55" font-family="Liberation Sans" font-weight="400" text-anchor="start" transform="rotate(-10 378 75)">ул. Карасай ба</text><text x="336" y="40" font-size="6.5" fill="#444a55" font-family="Liberation Sans" font-weight="400" text-anchor="start" transform="rotate(80 336 40)">ул. Брусиловского</text><text x="362" y="98" font-size="6.5" fill="#444a55" font-family="Liberation Sans" font-weight="400" text-anchor="start" transform="rotate(80 362 98)">ул. Тургута Озала</text><text x="404" y="104" font-size="6.5" fill="#444a55" font-family="Liberation Sans" font-weight="400" text-anchor="start" transform="rotate(-8 404 104)">ул. Ше</text><text x="327" y="157" font-size="8" fill="#2f4aa8" font-family="Liberation Sans" font-weight="700" text-anchor="start" transform="rotate(0 327 157)">Сайран</text><path d="M337.5 147.5 L338.5 142.5 L341 145.8 L343.5 142.5 L344.5 147.5" fill="none" stroke="#c44a78" stroke-width="1.2"/><path d="M336.5 148 A5 5 0 1 1 345.5 148" fill="none" stroke="#c44a78" stroke-width="0.9"/><text x="406" y="195" font-size="6.5" fill="#444a55" font-family="Liberation Sans" font-weight="400" text-anchor="start" transform="rotate(82 406 195)">ул. Абдуллы Розыбакиева</text><text x="112" y="287" font-size="7.2" fill="#4c62b0" font-family="Liberation Sans" font-weight="400" text-anchor="start" transform="rotate(0 112 287)">Бауыржан Момышулы</text><path d="M149.5 275.5 L150.5 270.5 L153 273.8 L155.5 270.5 L156.5 275.5" fill="none" stroke="#c44a78" stroke-width="1.2"/><path d="M148.5 276 A5 5 0 1 1 157.5 276" fill="none" stroke="#c44a78" stroke-width="0.9"/><text x="63" y="143" font-size="7.2" fill="#6a86c8" font-family="Liberation Sans" font-weight="400" text-anchor="start" transform="rotate(0 63 143)">Car City</text><circle cx="78" cy="130" r="4.5" fill="none" stroke="#6a86c8" stroke-width="1.3"/><text x="60" y="188" font-size="6" fill="#7f8ca6" font-family="Liberation Sans" font-weight="400" text-anchor="start" transform="rotate(-15 60 188)">Трудовая ул.</text><text x="197" y="166" font-size="6" fill="#7f8ca6" font-family="Liberation Sans" font-weight="400" text-anchor="start" transform="rotate(-18 197 166)">ул. Жубанова</text><text x="162" y="120" font-size="6" fill="#7f8ca6" font-family="Liberation Sans" font-weight="400" text-anchor="start" transform="rotate(72 162 120)">ул. Саина</text><text x="255" y="92" font-size="6" fill="#7f8ca6" font-family="Liberation Sans" font-weight="400" text-anchor="start" transform="rotate(72 255 92)">ул. Утеген батыра</text><text x="195" y="205" font-size="7.5" fill="#8fa4cf" font-family="Liberation Sans" font-weight="400" text-anchor="start" transform="rotate(0 195 205)">АУЭЗОВСКИЙ</text><text x="212" y="214" font-size="7.5" fill="#8fa4cf" font-family="Liberation Sans" font-weight="400" text-anchor="start" transform="rotate(0 212 214)">РАЙОН</text><text x="282" y="193" font-size="7.2" fill="#4c62b0" font-family="Liberation Sans" font-weight="400" text-anchor="start" transform="rotate(0 282 193)">Москва</text><path d="M291.5 183.5 L292.5 178.5 L295 181.8 L297.5 178.5 L298.5 183.5" fill="none" stroke="#c44a78" stroke-width="1.2"/><path d="M290.5 184 A5 5 0 1 1 299.5 184" fill="none" stroke="#c44a78" stroke-width="0.9"/><text x="232" y="239" font-size="7.2" fill="#4c62b0" font-family="Liberation Sans" font-weight="400" text-anchor="start" transform="rotate(0 232 239)">Сарыарка</text><path d="M245.5 229.5 L246.5 224.5 L249 227.8 L251.5 224.5 L252.5 229.5" fill="none" stroke="#c44a78" stroke-width="1.2"/><path d="M244.5 230 A5 5 0 1 1 253.5 230" fill="none" stroke="#c44a78" stroke-width="0.9"/><text x="190" y="285" font-size="6" fill="#7f8ca6" font-family="Liberation Sans" font-weight="400" text-anchor="start" transform="rotate(-28 190 285)">ул. Шаляпина</text><text x="176" y="345" font-size="6" fill="#7f8ca6" font-family="Liberation Sans" font-weight="400" text-anchor="start" transform="rotate(-30 176 345)">ул. Жандосова</text><text x="262" y="235" font-size="6" fill="#7f8ca6" font-family="Liberation Sans" font-weight="400" text-anchor="start" transform="rotate(50 262 235)">просп. Алтынсарина</text><text x="12" y="274" font-size="6.5" fill="#444a55" font-family="Liberation Sans" font-weight="400" text-anchor="start" transform="rotate(62 12 274)">ул. Байжана Ашимова</text><text x="140" y="424" font-size="6.5" fill="#444a55" font-family="Liberation Sans" font-weight="400" text-anchor="start" transform="rotate(-30 140 424)">ул. Кунаева</text><text x="310" y="378" font-size="6.5" fill="#444a55" font-family="Liberation Sans" font-weight="400" text-anchor="start" transform="rotate(-14 310 378)">ул. Торайгырова</text><text x="398" y="420" font-size="6.5" fill="#444a55" font-family="Liberation Sans" font-weight="400" text-anchor="start" transform="rotate(0 398 420)">просп</text></svg></div>

</div>
</body></html>
